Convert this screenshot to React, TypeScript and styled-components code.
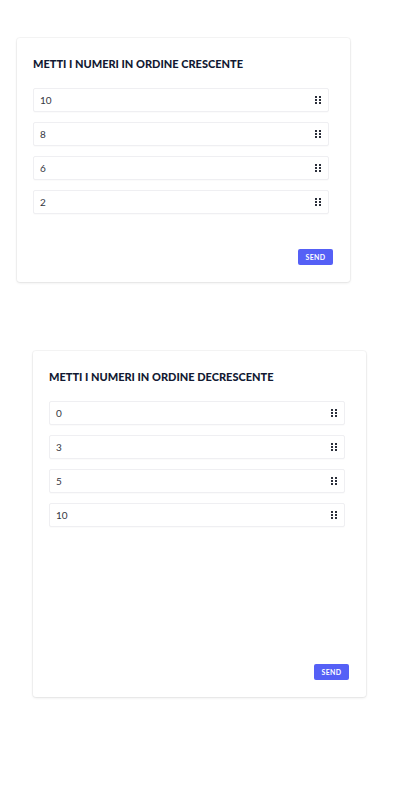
import React from "react";
import styled, { createGlobalStyle } from "styled-components";

const Global = createGlobalStyle`
  html, body { margin: 0; padding: 0; background: #ffffff; }
  body { font-family: Lato, "Noto Sans", Arial, sans-serif; }
  * { box-sizing: border-box; }
`;

const Page = styled.div`
  display: flex;
  flex-direction: column;
  align-items: flex-start;
  width: 400px;
  min-height: 800px;
  padding-top: 38px;
`;

const Card = styled.section<{ $indent: number; $gapTop: number }>`
  width: 333px;
  margin-left: ${(p) => p.$indent}px;
  margin-top: ${(p) => p.$gapTop}px;
  padding: 16px 17px 17px 16px;
  background: #ffffff;
  border-radius: 3px;
  box-shadow: 0 0 0 1px rgba(0, 0, 0, 0.035), 0 1px 3px rgba(0, 0, 0, 0.09);
  display: flex;
  flex-direction: column;
`;

const Title = styled.h2`
  margin: 0;
  padding-top: 2px;
  font-family: Lato, "Noto Sans", sans-serif;
  font-size: 11px;
  line-height: 16px;
  font-weight: 900;
  letter-spacing: 0;
  color: #121a33;
  text-transform: uppercase;
`;

const List = styled.ul<{ $minHeight: number }>`
  list-style: none;
  margin: 16px 0 0 0;
  padding: 0;
  width: 296px;
  min-height: ${(p) => p.$minHeight}px;
  display: flex;
  flex-direction: column;
  gap: 10px;
`;

const Item = styled.li`
  height: 24px;
  display: flex;
  align-items: center;
  justify-content: space-between;
  padding: 0 7px 0 6px;
  border: 1px solid #efeff2;
  border-radius: 2px;
  background: #ffffff;
  box-shadow: 0 1px 1px rgba(0, 0, 0, 0.02);
`;

const Num = styled.span`
  font-family: Lato, "Noto Sans", sans-serif;
  font-size: 10px;
  color: #35383f;
`;

const Footer = styled.div`
  display: flex;
  justify-content: flex-end;
  margin-top: 35px;
`;

const SendButton = styled.button`
  width: 35px;
  height: 16px;
  padding: 0;
  border: none;
  border-radius: 2px;
  background: #5560f6;
  color: #ffffff;
  font-family: Lato, "Noto Sans", sans-serif;
  font-weight: 700;
  font-size: 7px;
  letter-spacing: 0.4px;
  display: flex;
  align-items: center;
  justify-content: center;
  cursor: pointer;
`;

const Grip = () => (
  <svg width="6" height="8" viewBox="0 0 6 8" aria-hidden="true">
    {[0, 3, 6].map((y) =>
      [0, 4].map((x) => (
        <rect key={`${x}-${y}`} x={x} y={y} width="2" height="2" fill="#2b2f3a" />
      ))
    )}
  </svg>
);

type Exercise = { title: string; values: number[]; indent: number; gapTop: number; minHeight: number };

const exercises: Exercise[] = [
  { title: "Metti i numeri in ordine crescente", values: [10, 8, 6, 2], indent: 17, gapTop: 0, minHeight: 126 },
  { title: "Metti i numeri in ordine decrescente", values: [0, 3, 5, 10], indent: 33, gapTop: 69, minHeight: 228 },
];

export default function App() {
  return (
    <>
      <Global />
      <Page>
        {exercises.map((ex) => (
          <Card key={ex.title} $indent={ex.indent} $gapTop={ex.gapTop}>
            <Title>{ex.title}</Title>
            <List $minHeight={ex.minHeight}>
              {ex.values.map((v) => (
                <Item key={v}>
                  <Num>{v}</Num>
                  <Grip />
                </Item>
              ))}
            </List>
            <Footer>
              <SendButton>SEND</SendButton>
            </Footer>
          </Card>
        ))}
      </Page>
    </>
  );
}
